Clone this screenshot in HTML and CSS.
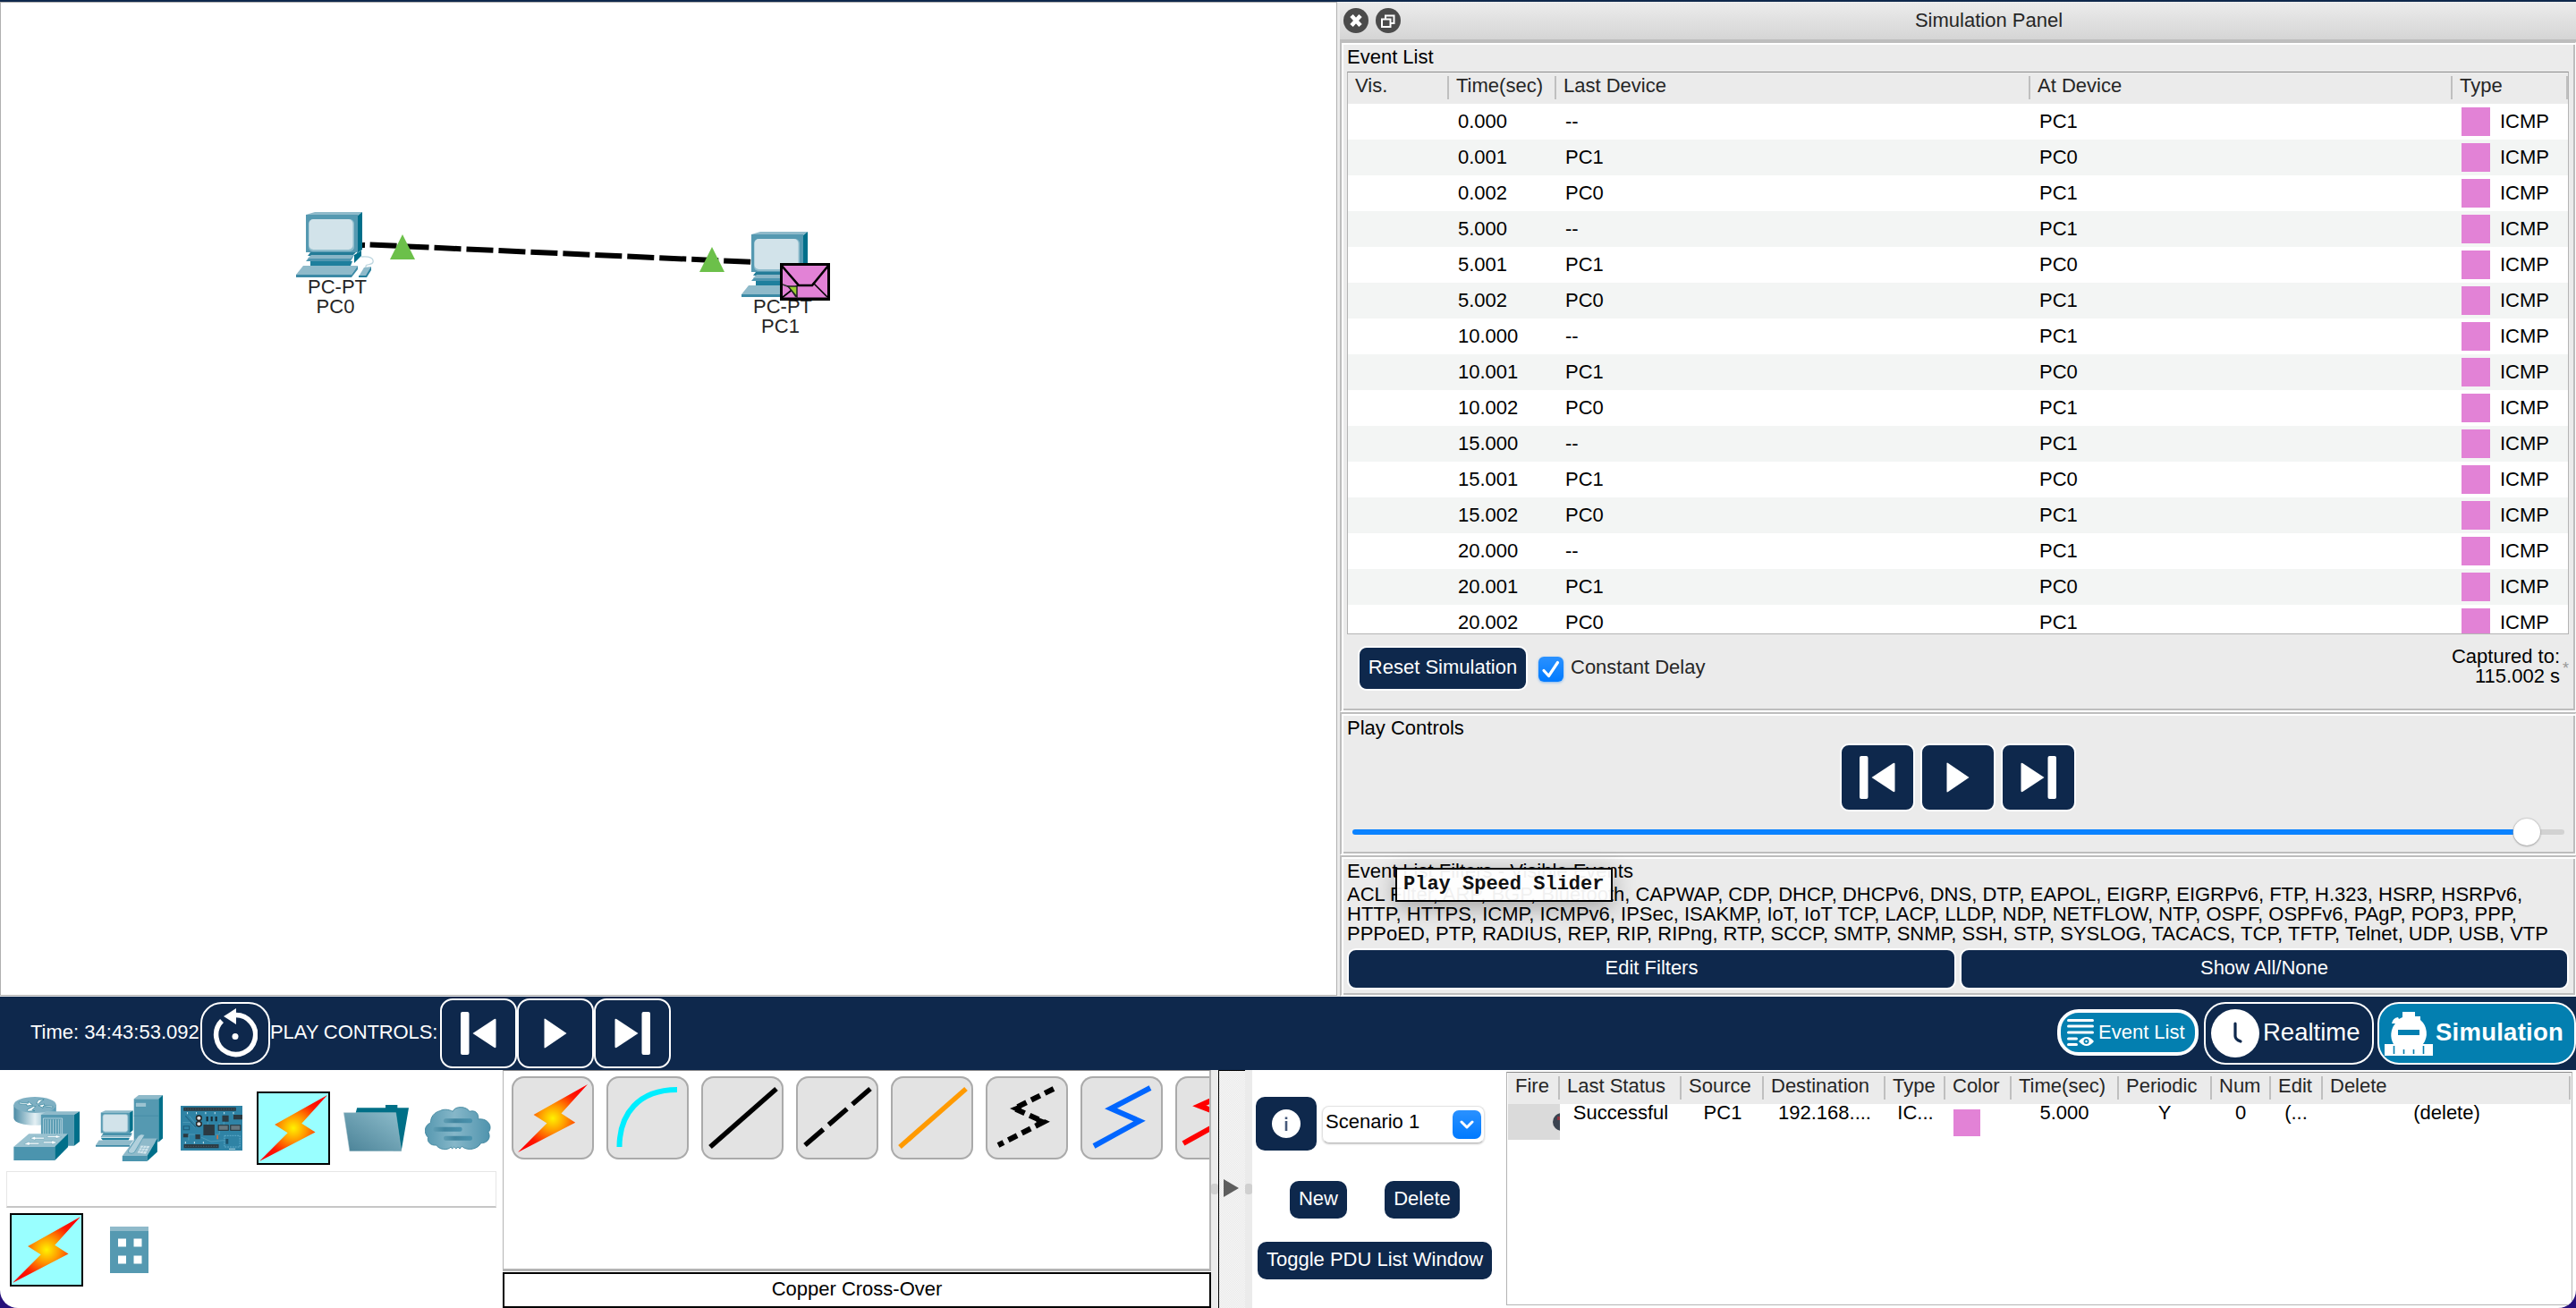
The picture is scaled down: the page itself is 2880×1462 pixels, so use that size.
FILE: index.html
```html
<!DOCTYPE html>
<html lang="en">
<head>
<meta charset="utf-8">
<title>Network Simulator</title>
<link rel="stylesheet" href="styles.css">
</head>
<body>
<svg class="defs" width="0" height="0" aria-hidden="true">
  <defs>
    <radialGradient id="fire" cx=".5" cy=".5" r=".58"><stop offset="0" stop-color="#fff200"/><stop offset=".32" stop-color="#ff9a00"/><stop offset=".72" stop-color="#ff1a00"/><stop offset="1" stop-color="#f00"/></radialGradient>
    <linearGradient id="steel" x1="0" y1="0" x2="1" y2="0"><stop offset="0" stop-color="#4b8ba5"/><stop offset=".5" stop-color="#e4f0f4"/><stop offset="1" stop-color="#4f96b0"/></linearGradient>
    <linearGradient id="folder" x1="1" y1="0" x2="0" y2="1"><stop offset="0" stop-color="#8dbccb"/><stop offset="1" stop-color="#4a8297"/></linearGradient>
    <linearGradient id="cloud" x1="0" y1="0" x2="1" y2="0"><stop offset="0" stop-color="#5698b0"/><stop offset=".45" stop-color="#86b7c9"/><stop offset="1" stop-color="#4f93ad"/></linearGradient>
    <linearGradient id="tube" x1="0" y1="0" x2="1" y2="0"><stop offset="0" stop-color="#5f9db3"/><stop offset=".4" stop-color="#41859f"/><stop offset="1" stop-color="#4a92ad"/></linearGradient>
    <symbol id="bolt" viewBox="801 55 209 219" preserveAspectRatio="none"><path d="M1010 55 931 149 973 178 801 274 888 180 848 153Z" fill="url(#fire)"/></symbol>
    <symbol id="pc" viewBox="0 0 88 76">
      <path d="M12 4 22 1H75L70 5Z" fill="#8fbaca"/><path d="M70 5 75 1V43L69 47Z" fill="#006f8a"/>
      <rect x="12" y="4" width="58" height="42" fill="#5599b1"/><rect x="15" y="9" width="51" height="36" rx="5" fill="#8ebccc"/><rect x="15.500" y="9" width="49" height="34" rx="5" fill="#d2e3ea"/>
      <path d="M17 46H68L64 50H14Z" fill="#247c98"/><path d="M18 49H66L62 56H12Z" fill="#4f96b0"/><path d="M18 49H66L62 53H14Z" fill="#8ab6c7"/><path d="M66 49 74 44V50L66 58Z" fill="#006f8a"/>
      <path d="M17 56H64L62 61H17Z" fill="#1e7f9d"/><path d="M9 61H70L63 71H1Z" fill="#8fbaca"/><path d="M1 71H63V74H1ZM63 71 70 61V65L63 74Z" fill="#3c8aa6"/>
      <path d="M74 51C84 50 88 53 87 57S78 58 79 63" fill="none" stroke="#bfd7e0" stroke-width="1.300"/>
      <path d="M77 63 85 62 80 73H71Z" fill="#8fbaca"/><path d="M85 62V66L80 74H71V72H79Z" fill="#277f9c"/>
    </symbol>
    <symbol id="prev" viewBox="0 0 40 48"><rect width="9.500" height="48" rx="2"/><path d="M13.500 24 37 8.500Q39.500 7 39.500 9V39Q39.500 41 37 39.500Z"/></symbol>
    <symbol id="play" viewBox="0 0 26 34"><path d="M.5 1.500Q.5 0 2 1L25.500 17 2 33Q.5 34 .5 32.500Z"/></symbol>
    <symbol id="next" viewBox="0 0 40 48"><rect x="30.500" width="9.500" height="48" rx="2"/><path d="M26.500 24 3 8.500Q.5 7 .5 9V39Q.5 41 3 39.500Z"/></symbol>
  </defs>
</svg>

<div class="window">
  <div class="top-strip"></div>
  <main class="main">
    <section class="workspace">
      <svg class="canvas" width="1493" height="1108" viewBox="1 3 1493 1108">
        <path d="M405 274 408 274.100" stroke="#000" stroke-width="6"/>
        <path d="M413.600 273.500 842 293" stroke="#000" stroke-width="6" stroke-dasharray="30 6"/>
        <use href="#pc" x="330" y="236" width="88" height="76"/>
        <use href="#pc" x="828" y="258" width="88" height="76"/>
        <path d="M450 262 464 290H436ZM796 276 810 304H782Z" fill="#6cc04a"/>
        <g class="device-label">
          <text x="377" y="328">PC-PT</text><text x="375" y="350">PC0</text>
          <text x="875" y="350">PC-PT</text><text x="872.500" y="372">PC1</text>
        </g>
        <rect x="873.500" y="295.500" width="53" height="38.500" fill="#e282d6" stroke="#000" stroke-width="3"/>
        <path d="M872 335H928" stroke="#000" stroke-width="2"/>
        <path d="M874 297 893 319H908L926 297" fill="none" stroke="#000" stroke-width="2.600"/><path d="M893 318 874 333M909 316 925 332" stroke="#000" stroke-width="1.600"/>
        <path d="M875 318 883 321 890 332" fill="none" stroke="#333" stroke-width="1.600"/><path d="M881 320H891V332Z" fill="#9acd32" stroke="#222" stroke-width="1.500"/>
      </svg>
    </section>

    <aside class="sim-panel">
      <header class="panel-title">
        <svg width="28" height="28" viewBox="0 0 28 28" class="round"><circle cx="14" cy="14" r="14" fill="#4b4b4b"/><path d="M9 8.500 19 19.500M19 8.500 9 19.500" stroke="#fff" stroke-width="4.600"/></svg>
        <svg width="28" height="28" viewBox="0 0 28 28" class="round"><circle cx="14" cy="14" r="14" fill="#4b4b4b"/><path d="M11 12V8.500H20.500V17H17M7 12.500H16.500V21H7Z" fill="none" stroke="#fff" stroke-width="2"/></svg>
        <span>Simulation Panel</span>
      </header>

      <section class="group events">
        <h2>Event List</h2>
        <div class="event-table">
          <div class="tr th"><span>Vis.</span><span>Time(sec)</span><span>Last Device</span><span>At Device</span><span>Type</span></div>
          <div class="tr"><i></i><b>0.000</b><b>--</b><b>PC1</b><b class="type">ICMP</b></div>
          <div class="tr"><i></i><b>0.001</b><b>PC1</b><b>PC0</b><b class="type">ICMP</b></div>
          <div class="tr"><i></i><b>0.002</b><b>PC0</b><b>PC1</b><b class="type">ICMP</b></div>
          <div class="tr"><i></i><b>5.000</b><b>--</b><b>PC1</b><b class="type">ICMP</b></div>
          <div class="tr"><i></i><b>5.001</b><b>PC1</b><b>PC0</b><b class="type">ICMP</b></div>
          <div class="tr"><i></i><b>5.002</b><b>PC0</b><b>PC1</b><b class="type">ICMP</b></div>
          <div class="tr"><i></i><b>10.000</b><b>--</b><b>PC1</b><b class="type">ICMP</b></div>
          <div class="tr"><i></i><b>10.001</b><b>PC1</b><b>PC0</b><b class="type">ICMP</b></div>
          <div class="tr"><i></i><b>10.002</b><b>PC0</b><b>PC1</b><b class="type">ICMP</b></div>
          <div class="tr"><i></i><b>15.000</b><b>--</b><b>PC1</b><b class="type">ICMP</b></div>
          <div class="tr"><i></i><b>15.001</b><b>PC1</b><b>PC0</b><b class="type">ICMP</b></div>
          <div class="tr"><i></i><b>15.002</b><b>PC0</b><b>PC1</b><b class="type">ICMP</b></div>
          <div class="tr"><i></i><b>20.000</b><b>--</b><b>PC1</b><b class="type">ICMP</b></div>
          <div class="tr"><i></i><b>20.001</b><b>PC1</b><b>PC0</b><b class="type">ICMP</b></div>
          <div class="tr"><i></i><b>20.002</b><b>PC0</b><b>PC1</b><b class="type">ICMP</b></div>
        </div>
        <div class="event-actions">
          <button class="btn reset">Reset Simulation</button>
          <span class="check"><svg width="28" height="28" viewBox="0 0 28 28"><path d="M6 15.500 11.500 21.500 21.500 6.500" fill="none" stroke="#fff" stroke-width="3.200" stroke-linecap="round" stroke-linejoin="round"/></svg></span>
          <span class="check-label">Constant Delay</span>
          <span class="captured">Captured to:<br>115.002 s</span><span class="star">*</span>
        </div>
      </section>

      <section class="group controls">
        <h2>Play Controls</h2>
        <div class="play-row">
          <button class="btn"><svg width="40" height="48"><use href="#prev"/></svg></button>
          <button class="btn"><svg width="26" height="34"><use href="#play"/></svg></button>
          <button class="btn"><svg width="40" height="48"><use href="#next"/></svg></button>
        </div>
        <div class="slider"><span class="filled"></span><span class="thumb"></span><span class="rest"></span></div>
      </section>

      <section class="group filters">
        <h2>Event List Filters - Visible Events</h2>
        <p>ACL Filter, ARP, BGP, Bluetooth, CAPWAP, CDP, DHCP, DHCPv6, DNS, DTP, EAPOL, EIGRP, EIGRPv6, FTP, H.323, HSRP, HSRPv6,<br>HTTP, HTTPS, ICMP, ICMPv6, IPSec, ISAKMP, IoT, IoT TCP, LACP, LLDP, NDP, NETFLOW, NTP, OSPF, OSPFv6, PAgP, POP3, PPP,<br>PPPoED, PTP, RADIUS, REP, RIP, RIPng, RTP, SCCP, SMTP, SNMP, SSH, STP, SYSLOG, TACACS, TCP, TFTP, Telnet, UDP, USB, VTP</p>
        <div class="filter-row"><button class="btn">Edit Filters</button><button class="btn">Show All/None</button></div>
        <div class="tooltip">Play Speed Slider</div>
      </section>
    </aside>
  </main>

  <nav class="toolbar">
    <span class="time">Time: 34:43:53.092</span>
    <button class="tb cycle"><svg width="50" height="56" viewBox="0 0 50 56"><path d="M10 14A22 22 0 1 0 25 7.500" fill="none" stroke="#fff" stroke-width="5.500"/><path d="M12 9 26 0V18Z" fill="#fff"/><circle cx="25" cy="31.500" r="3.500" fill="#fff"/></svg></button>
    <span class="pc-label">PLAY CONTROLS:</span>
    <button class="tb step"><svg width="40" height="48"><use href="#prev"/></svg></button>
    <button class="tb step"><svg width="26" height="34"><use href="#play"/></svg></button>
    <button class="tb step"><svg width="40" height="48"><use href="#next"/></svg></button>
    <span class="spacer"></span>
    <button class="tb ev-list"><svg width="30" height="32" viewBox="0 0 30 32"><path d="M1.500 2.500H28.500M1.500 9H28.500M1.500 16H28.500M1.500 23H10.500M1.500 29.500H10.500" stroke="#fff" stroke-width="3" stroke-linecap="round"/><path d="M13 26Q22 16 30 26Q22 36 13 26Z" fill="#fff"/><circle cx="21.500" cy="26" r="3" fill="#037fb0"/><circle cx="21.500" cy="26" r="1.200" fill="#fff"/></svg><span>Event List</span></button>
    <button class="tb realtime"><svg width="54" height="54" viewBox="0 0 54 54"><circle cx="27" cy="27" r="27" fill="#fff"/><path d="M27 16V30Q27 34 33 36" fill="none" stroke="#0e284c" stroke-width="3.200" stroke-linecap="round"/></svg><span>Realtime</span></button>
    <button class="tb simulation"><svg width="54" height="49" viewBox="0 0 54 49"><path d="M20 0H34V5H40V9A20 20 0 0 1 43 36H54V49H0V36H10A20 20 0 0 1 12 13L8 13Q9 7 15 6L16 8 20 6Z" fill="#fff"/><rect x="15" y="20" width="24" height="6" fill="#037fb0"/><path d="M10.500 38V47M21.500 42V47M32.500 42V47M43.500 38V47" stroke="#037fb0" stroke-width="1.600"/></svg><span>Simulation</span></button>
  </nav>

  <div class="bottom">
    <section class="palette">
      <div class="categories">
        <svg width="74" height="71" viewBox="32 60 206 213" preserveAspectRatio="none">
          <path d="M33 86V132C36 163 162 163 165 132V86Z" fill="url(#steel)"/><ellipse cx="99" cy="87" rx="66" ry="27" fill="#7fb0c3"/>
          <path d="M49 78 78 82V76L92 87 74 90V86L50 83ZM154 96 124 91V97L110 89 128 84V89L154 91ZM104 82 110 70 127 69 116 76 109 84ZM74 104 94 92 101 92 90 104 98 107 78 108Z" fill="#fff" stroke="#0b6d88" stroke-width="1.500"/>
          <path d="M118 120 136 109H238L221 120Z" fill="#8fbaca"/><path d="M118 120H221V224H118Z" fill="#5599b1"/><path d="M221 120 238 109V210L221 224Z" fill="#006f8a"/><path d="M125 132H184V188H125Z" fill="#5599b1" stroke="#d6e7ed" stroke-width="2"/><path d="M132 136V186M140 136V186M148 136V186M156 136V186M164 136V186M172 136V186M179 136V186" stroke="#b9d5df" stroke-width="2.500"/>
          <path d="M33 227 80 184H202L161 227Z" fill="#9ac2d0"/><path d="M33 227H161V273H33Z" fill="#4b94ae"/><path d="M161 227 202 184V228L161 273Z" fill="#006f8a"/>
          <path d="M85 199 100 192V196H128V201H100V205ZM181 194 164 188V191H138V196H164V199ZM65 218 82 210V214H112V219H82V223ZM168 213 152 206V210H125V215H152V219Z" fill="#fff" stroke="#4a8fa8" stroke-width="1"/>
        </svg>
        <svg width="75" height="74" viewBox="284 54 209 223" preserveAspectRatio="none">
          <path d="M403 67 418 54H493L480 67Z" fill="#8fbaca"/><path d="M403 67H480V212H403Z" fill="#5599b1"/><path d="M480 67 493 54V200L480 212Z" fill="#006f8a"/><rect x="408" y="79" width="34" height="15" fill="#9cc3d1" stroke="#3c8aa6" stroke-width="1.500"/><path d="M403 124H480" stroke="#3f8aa5" stroke-width="2"/>
          <path d="M300 113 314 106H400L390 113Z" fill="#8fbaca"/><path d="M300 113H390V182H300Z" fill="#5599b1"/><path d="M390 113 400 106V172L390 182Z" fill="#006f8a"/><rect x="306" y="119" width="78" height="59" rx="7" fill="#d2e3ea" stroke="#8ebccc" stroke-width="2"/>
          <path d="M308 182H398L390 196H300Z" fill="#2c829f"/><path d="M306 188H398L390 196H300Z" fill="#8ab6c7"/><path d="M300 198H390L386 206H306Z" fill="#1e7f9d"/><path d="M294 206H402L390 223H284Z" fill="#8fbaca"/><path d="M284 223H390V228H284Z" fill="#3c8aa6"/>
          <path d="M367 259 408 200H476L444 259Z" fill="#8fbaca"/><path d="M367 259H444V277H367Z" fill="#4b94ae"/><path d="M444 259 476 200V245L444 277Z" fill="#006f8a"/><path d="M386 240 416 192Q424 182 437 188L404 248Q396 254 386 248Z" fill="#b1d0dc" stroke="#4b94ae" stroke-width="2"/><path d="M425 224 452 226 440 252 414 248Z" fill="#d2e5ec"/><path d="M421 232 448 234M417 240 444 243M434 225 422 248M443 226 431 250" stroke="#7aaec1" stroke-width="1.500"/>
        </svg>
        <svg width="69" height="50" viewBox="555 94 193 150" preserveAspectRatio="none">
          <rect x="555" y="94" width="193" height="150" fill="#2f83a5"/><path d="M564 99H728V111H564ZM565 223H674V236H565ZM685 126H705V147H685ZM720 124H748V140H720ZM626 157H661V193H626ZM563 188H579V200H563ZM601 190H616V206H601Z" fill="#2b3a42"/>
          <path d="M568 105H726M569 230H672" stroke="#4e5e66" stroke-width="3" stroke-dasharray="4 4"/>
          <path d="M572 130 600 168M582 128 606 160M586 150H562M580 210V190H600M620 200 650 214 690 210M676 152V190H664M640 148V157M690 147V160" fill="none" stroke="#5ba3bf" stroke-width="2"/>
          <path d="M570 128 602 166" stroke="#1d6384" stroke-width="3"/><path d="M564 162H582V174H564Z" fill="none" stroke="#1d5b78" stroke-width="3"/>
          <rect x="673" y="159" width="31" height="17" fill="#667880" stroke="#24343b" stroke-width="3"/><rect x="711" y="159" width="31" height="17" fill="#667880" stroke="#24343b" stroke-width="3"/>
          <circle cx="612" cy="135" r="8" fill="#ddd" stroke="#222" stroke-width="4"/><circle cx="612" cy="155" r="8" fill="#ddd" stroke="#222" stroke-width="4"/>
          <path d="M638 130V146M652 130V146M666 130V146" stroke="#182b34" stroke-width="6"/><path d="M670 192V206" stroke="#c0754b" stroke-width="5"/><path d="M692 194H740V232H692Z" fill="none" stroke="#7bc2de" stroke-width="2" stroke-dasharray="5 3"/><rect x="696" y="205" width="8" height="17" fill="#1d4f67"/>
          <path d="M576 115V122M604 115V122M633 115V122M662 115V122M691 115V122M720 115V122M570 214V221M598 214V221M626 214V221M706 239H726" stroke="#bfe0ec" stroke-width="3"/>
        </svg>
        <span class="picked"><svg width="76" height="74"><use href="#bolt"/></svg></span>
        <svg width="73" height="52" viewBox="1066 86 202 156" preserveAspectRatio="none"><path d="M1104 112 1108 96H1196V86H1233V96H1268L1245 240H1220Z" fill="#006f87"/><path d="M1067 112H1228L1245 241H1085Z" fill="url(#folder)" stroke="#a9c4cd" stroke-width="1.500"/></svg>
        <svg width="74" height="49" viewBox="1320 86 208 148" preserveAspectRatio="none"><path d="M1368 100C1376 94 1394 94 1408 102C1414 82 1452 84 1460 102C1478 96 1490 108 1488 128C1520 124 1534 154 1520 172C1530 196 1512 210 1496 209C1488 228 1456 238 1436 220L1430 228 1424 222 1418 228 1412 222 1406 228 1402 222C1390 236 1364 230 1356 216C1338 218 1326 204 1330 190C1314 172 1320 148 1338 140C1338 120 1350 104 1368 100Z" fill="url(#cloud)" stroke="#3c839c" stroke-width="2.500"/><rect x="1379" y="126" width="90" height="15" rx="6" fill="url(#tube)"/><rect x="1346" y="155" width="91" height="15" rx="6" fill="url(#tube)"/><rect x="1379" y="185" width="90" height="15" rx="6" fill="url(#tube)"/></svg>
      </div>
      <div class="search"></div>
      <div class="subcats">
        <span class="picked"><svg width="76" height="74"><use href="#bolt"/></svg></span>
        <svg width="43" height="52" viewBox="0 0 43 52"><rect width="43" height="52" fill="#5599b1"/><rect width="43" height="5" fill="#8fbaca"/><path d="M9 13.500H18V22.500H9ZM26.500 13.500H35.500V22.500H26.500ZM9 32.500H18V41.500H9ZM26.500 32.500H35.500V41.500H26.500Z" fill="#fff"/></svg>
      </div>
    </section>

    <section class="connections">
      <div class="cards">
        <span class="card"><svg width="78" height="76"><use href="#bolt"/></svg></span>
        <span class="card"><svg viewBox="0 0 92 93"><path d="M14.500 79C14.500 42 36 15 79 15" fill="none" stroke="#00eeff" stroke-width="6"/></svg></span>
        <span class="card"><svg viewBox="0 0 92 93"><path d="M10 79 84 14" stroke="#000" stroke-width="5.500"/></svg></span>
        <span class="card"><svg viewBox="0 0 92 93"><path d="M10 77 83 14" stroke="#000" stroke-width="5.500" stroke-dasharray="27 8"/></svg></span>
        <span class="card"><svg viewBox="0 0 92 93"><path d="M10 79 84 14" stroke="#ff9a00" stroke-width="5.500"/></svg></span>
        <span class="card"><svg viewBox="0 0 92 93"><path d="M76 14 32 36 65 51 14 77" fill="none" stroke="#000" stroke-width="6" stroke-dasharray="11 6"/><path d="M27 36 42 30 38 41ZM69 50 56 45 57 56Z"/></svg></span>
        <span class="card"><svg viewBox="0 0 92 93"><path d="M78 13 34 36 66 50 15 78" fill="none" stroke="#06f" stroke-width="6"/></svg></span>
        <span class="card"><svg viewBox="0 0 92 93"><path d="M76 11 27 33 61 46 9 75" fill="none" stroke="#f00" stroke-width="6"/></svg></span>
      </div>
      <div class="conn-name">Copper Cross-Over</div>
    </section>
    <div class="splitter"></div>
    <div class="collapse"><svg width="17" height="20" viewBox="0 0 17 20"><path d="M0 0 17 10 0 20Z" fill="#5e5e5e"/></svg></div>
    <div class="splitter"></div>

    <section class="scenario">
      <div class="scn-row">
        <button class="btn info"><svg width="32" height="32" viewBox="0 0 32 32"><circle cx="16" cy="16" r="16" fill="#fff"/><path d="M16 13V24M16 8.500V11" stroke="#46597a" stroke-width="2.600"/></svg></button>
        <div class="select"><span>Scenario 1</span><i><svg width="16" height="10" viewBox="0 0 16 10"><path d="M2 2 8 8 14 2" fill="none" stroke="#fff" stroke-width="3" stroke-linecap="round" stroke-linejoin="round"/></svg></i></div>
      </div>
      <div class="scn-btns"><button class="btn new">New</button><button class="btn del">Delete</button></div>
      <button class="btn toggle">Toggle PDU List Window</button>
    </section>

    <section class="pdu">
      <div class="pr ph"><span>Fire</span><span>Last Status</span><span>Source</span><span>Destination</span><span>Type</span><span>Color</span><span>Time(sec)</span><span>Periodic</span><span>Num</span><span>Edit</span><span>Delete</span></div>
      <div class="pr pd"><span class="fire"><svg width="8" height="20" viewBox="0 0 8 20"><circle cx="10" cy="10" r="10" fill="#3a4350"/><path d="M5 4H8V8H5Z" fill="#8c3540"/></svg></span><span>Successful</span><span>PC1</span><span>192.168....</span><span>IC...</span><span class="swatch"></span><span>5.000</span><span>Y</span><span>0</span><span>(...</span><span>(delete)</span></div>
    </section>
  </div>
</div>
</body>
</html>
```
FILE: styles.css
```css
* { box-sizing: border-box; }
body { margin: 0; background: #26107a; font: 22px/22px "Liberation Sans", Arial, sans-serif; color: #000; }
svg { display: block; }
.defs { position: absolute; }
button { font: inherit; padding: 0; margin: 0; }
h2 { margin: 0; font: inherit; }
.window { width: 2880px; height: 1462px; display: flex; flex-direction: column; overflow: hidden; background: #fff; border-radius: 0 0 20px 20px; }
.top-strip { height: 2px; background: #0e284c; }

.main { height: 1112px; display: flex; background: #ebebeb; }
.workspace { width: 1495px; height: 1111px; border: 1px solid #b0b0b0; background: #fff; margin-right: 3px; }
.device-label { font-size: 22px; fill: #262626; text-anchor: middle; }

.sim-panel { flex: 1; display: flex; flex-direction: column; }
.panel-title { height: 44px; display: flex; align-items: center; gap: 8px; padding-left: 4px; background: linear-gradient(#ececec, #d5d5d5); border-bottom: 2px solid #bdbdbd; color: #262626; }
.panel-title span { flex: 1; text-align: center; padding-right: 16px; padding-left: 8px; }
.round { width: 28px; height: 28px; }
.group { position: relative; border: 2px solid #bdbdbd; border-right-color: #fff; border-bottom-color: #fff; box-shadow: inset 2px 2px #fff, inset -2px -2px #bdbdbd; padding: 0 7px 0 6px; }
.group h2 { height: 30px; padding: 5px 0 0; }
.events { height: 750px; }
.events h2 { height: 32px; padding-top: 5px; }
.controls { height: 160px; }
.filters { height: 158px; }

.event-table { height: 629px; border: 1px solid #b4b4b4; border-top-color: #8c8c8c; overflow: hidden; }
.tr { display: grid; grid-template-columns: 113px 120px 530px 472px 129px; height: 40px; align-items: center; background: #fff; }
.tr:nth-child(odd) { background: #f3f5f4; }
.tr b { font-weight: normal; padding-left: 10px; }
.tr.th { height: 35px; background: #ebebeb; color: #262626; }
.th span { height: 26px; padding: 0 0 0 8px; border-right: 2px solid #bfbfbf; margin-top: -2px; }
.tr .type { display: flex; align-items: center; gap: 11px; padding-left: 10px; }
.type::before { content: ""; width: 32px; height: 32px; background: #e282d6; }

.btn { display: flex; align-items: center; justify-content: center; background: #0e284c; color: #fff; fill: #fff; border: 2px solid #fff; border-radius: 10px; }
.event-actions { display: flex; align-items: flex-start; padding: 13px 0 0 12px; }
.reset { width: 190px; height: 50px; padding-bottom: 3px; }
.check { width: 28px; height: 28px; margin: 12px 8px 0 12px; border-radius: 6px; background: linear-gradient(#2a91ff, #007aff); box-shadow: 0 1px 3px #7ab4f0; }
.check-label { margin-top: 13px; color: #262626; }
.captured { margin: 1px 0 0 auto; text-align: right; }
.star { width: 10px; margin-top: 14px; padding-left: 3px; font-size: 18px; line-height: 22px; color: #999; }

.play-row { display: flex; justify-content: center; gap: 6px; margin: 3px 1px 8px 0; }
.play-row .btn { width: 84px; height: 76px; }
.slider { display: flex; align-items: center; height: 30px; margin: 0 5px 0 6px; }
.filled { flex: 1; height: 6px; background: #0a82ff; border-radius: 3px 0 0 3px; }
.thumb { width: 30px; height: 30px; border-radius: 50%; background: #fff; box-shadow: 0 0 2px #999, 0 1px 2px #aaa; z-index: 1; }
.rest { width: 27px; height: 6px; background: #d2d2d2; border-radius: 0 3px 3px 0; }

.filters p { margin: 1px 0 5px; white-space: nowrap; }
.filter-row { display: flex; gap: 4px; }
.filter-row .btn { flex: 1; height: 46px; padding-bottom: 3px; }
.tooltip { position: absolute; left: 60px; top: 12px; width: 243px; height: 38px; border: 2px solid #000; background: rgba(255,255,255,.94); font: bold 22px/33px "Courier New", "Liberation Mono", monospace; padding-left: 7px; white-space: nowrap; box-shadow: 0 6px 26px rgba(0,0,0,.32); color: #111; }

.toolbar { height: 82px; display: flex; align-items: center; background: #0e284c; color: #fff; fill: #fff; white-space: nowrap; }
.time { width: 224px; padding: 0 0 2px 34px; }
.tb { display: flex; align-items: center; justify-content: center; color: #fff; fill: #fff; background: none; border: 2px solid #fff; }
.cycle { width: 78px; height: 70px; border-radius: 24px; padding-bottom: 1px; }
.pc-label { width: 190px; padding: 0 0 2px; letter-spacing: -.1px; }
.step { width: 86px; height: 78px; border-radius: 14px; }
.spacer { flex: 1; }
.ev-list { width: 158px; height: 52px; border-width: 4px; border-radius: 24px; background: #037fb0; justify-content: flex-start; padding-left: 7px; gap: 5px; margin: -2px 6px 0 0; }
.ev-list span { padding-bottom: 1px; }
.realtime { width: 190px; height: 70px; border-radius: 24px; margin-right: 4px; justify-content: flex-start; padding-left: 6px; gap: 4px; font-size: 27.500px; line-height: 30px; }
.realtime span, .simulation span { padding-bottom: 3px; }
.simulation { width: 222px; height: 70px; border-radius: 24px; background: #037fb0; justify-content: flex-start; padding-left: 6px; gap: 3px; font-size: 27.500px; line-height: 30px; font-weight: bold; letter-spacing: .25px; }

.bottom { height: 266px; display: flex; }
.palette { width: 562px; padding: 24px 7px 0; }
.categories, .subcats { display: grid; grid-template-columns: repeat(6, 92px); height: 82px; place-items: center; margin-left: -1px; }
.search { height: 41px; margin: 7px 0 6px; border: 1px solid #e6e6e6; border-bottom: 2px solid #c6c6c6; }
.picked { width: 82px; height: 82px; border: 2px solid #000; background: #99ffff; display: grid; place-items: center; }
.connections { width: 792px; }
.cards { height: 225px; border: 1px solid #b4b4b4; border-right-width: 2px; border-bottom-width: 3px; border-top-color: #8c8c8c; display: flex; gap: 14px; padding: 6px 0 0 9px; overflow: hidden; margin-bottom: 1px; }
.card { flex: none; width: 92px; height: 93px; border-radius: 14px; background: #e3e3e3; box-shadow: inset 0 0 0 2px #aaa; display: grid; place-items: center; }
.conn-name { height: 40px; border: 2px solid #000; text-align: center; line-height: 34px; }
.splitter { width: 8px; background: #ebebeb; display: flex; align-items: center; }
.splitter::before { content: ""; width: 8px; height: 12px; border-radius: 3px; background: #d0d0d0; }
.collapse { width: 30px; border-left: 1px solid #000; border-top: 1px solid #000; background: repeating-conic-gradient(#e9e9e9 0 25%, #f7f7f7 0 50%) 0 0 / 2px 2px; display: flex; align-items: center; padding: 0 0 3px 5px; }

.scenario { width: 284px; padding: 30px 0 0 4px; }
.scn-row { display: flex; gap: 6px; align-items: center; }
.scenario .btn { border: 0; }
.info { width: 68px; height: 60px; }
.select { width: 182px; height: 42px; margin-top: 2px; border-radius: 8px; border: 1px solid #e2e2e2; border-bottom-color: #bcbcbc; box-shadow: 0 1px 2px #ccc; display: flex; align-items: center; padding: 0 3px; }
.select span { flex: 1; padding-bottom: 6px; }
.select i { width: 32px; height: 32px; border-radius: 7px; background: linear-gradient(#2a91ff, #007aff); display: grid; place-items: center; }
.scn-btns { display: flex; gap: 42px; margin: 34px 0 26px 38px; }
.scn-btns .btn, .toggle { height: 42px; padding-bottom: 3px; }
.new { width: 64px; }
.del { width: 84px; }
.scenario .toggle { width: 262px; margin-left: 2px; }

.pdu { width: 1192px; height: 261px; margin-top: 2px; border: 1px solid #b4b4b4; border-top-color: #8c8c8c; padding: 0 1px; }
.pr { display: grid; grid-template-columns: 58px 136px 92px 136px 67px 74px 120px 104px 66px 58px 1fr; white-space: nowrap; }
.ph { height: 35px; background: #ebebeb; color: #262626; align-items: center; }
.ph span { height: 26px; padding: 0 0 0 8px; border-right: 2px solid #bfbfbf; margin-top: -2px; }
.pd { text-align: center; height: 40px; line-height: 20px; }
.pd span:nth-child(n+7):nth-child(-n+10) { padding-right: 2px; }
.fire { background: #dadada; display: flex; align-items: center; justify-content: flex-end; }
.swatch { width: 30px; height: 30px; background: #e282d6; margin: 6px 0 0 9px; }
```
